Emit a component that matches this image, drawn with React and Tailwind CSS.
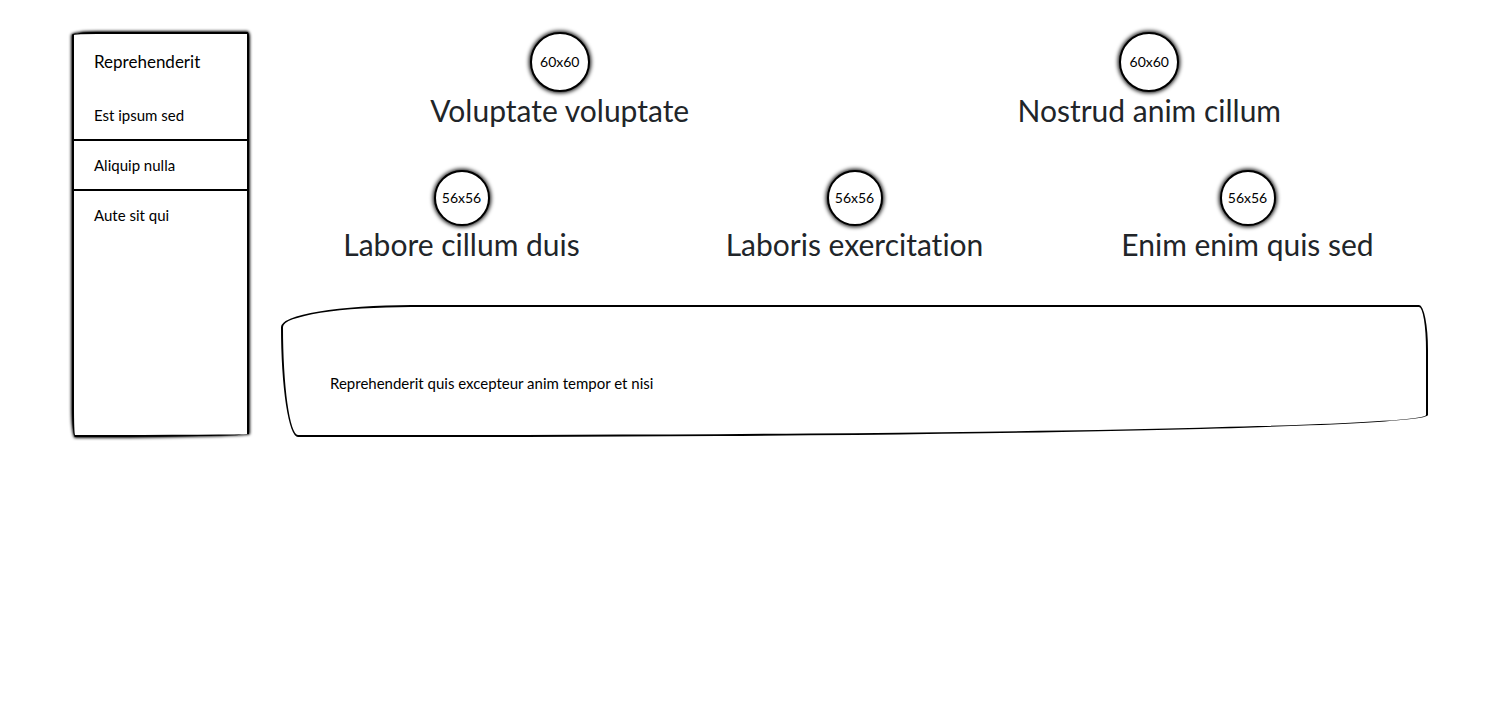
const links = ["Est ipsum sed", "Aliquip nulla", "Aute sit qui"];
const primary = ["Voluptate voluptate", "Nostrud anim cillum"];
const secondary = ["Labore cillum duis", "Laboris exercitation", "Enim enim quis sed"];

function Feature({ title, label, sizeClass }) {
  return (
    <article className="flex flex-col items-center pb-2">
      <div
        className={`flex items-center justify-center rounded-full border-2 border-black bg-white text-sm text-black shadow-[0_0_4px_1px_#000] ${sizeClass}`}
      >
        {label}
      </div>
      <h2 className="pb-0.5 text-center text-[30px] leading-9 text-[#212529]">{title}</h2>
    </article>
  );
}

export default function App() {
  return (
    <div className="flex gap-8 bg-white px-[72px] py-8 font-['Lato','Liberation_Sans',sans-serif] text-[15px] text-black [font-variant-ligatures:none]">
      <aside className="w-[177px] shrink-0 rounded-[25px_2px_170px_3px/3px_5px_3px_30px] border-2 border-black bg-white shadow-[0_0_3px_1px_#000]">
        <div className="flex h-14 items-center px-5 text-[17px]">Reprehenderit</div>
        <nav className="pt-px">
          <ul>
            {links.map((link) => (
              <li key={link} className="h-[50px] border-b-2 border-black last:border-b-0">
                <a href="#" className="flex h-12 items-center px-5">
                  {link}
                </a>
              </li>
            ))}
          </ul>
        </nav>
      </aside>

      <main className="flex min-w-0 flex-1 flex-col gap-8">
        <section className="grid grid-cols-2 gap-8">
          {primary.map((title) => (
            <Feature key={title} title={title} label="60x60" sizeClass="size-[60px]" />
          ))}
        </section>
        <section className="grid grid-cols-3 gap-8 pb-px">
          {secondary.map((title) => (
            <Feature key={title} title={title} label="56x56" sizeClass="size-[56px]" />
          ))}
        </section>
        <section className="rounded-[130px_9px_1000px_17px/22px_45px_22px_110px] border-2 border-black px-[47px] pt-16 pb-10">
          <p className="leading-6">Reprehenderit quis excepteur anim tempor et nisi</p>
        </section>
      </main>
    </div>
  );
}
